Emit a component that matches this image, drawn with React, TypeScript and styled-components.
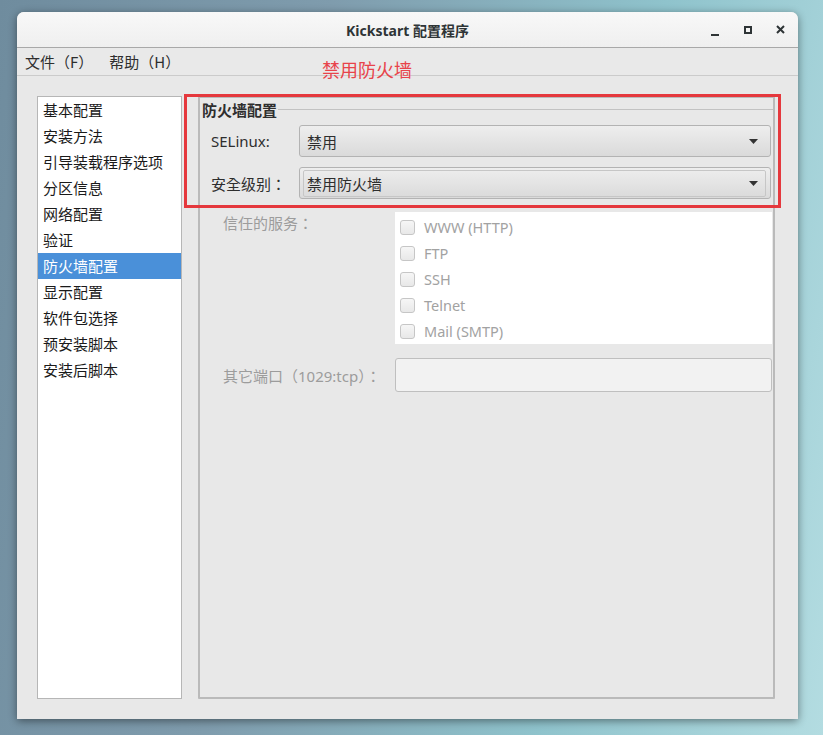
import React from 'react';
import styled, { createGlobalStyle } from 'styled-components';

const FONT = '"Noto Sans", "Noto Sans CJK SC", sans-serif';
const CJK_FONT = '"Noto Sans CJK SC", "Noto Sans", sans-serif';
const LABEL_FONT = '"Noto Sans", "Noto Sans CJK TC", "Noto Sans CJK SC", sans-serif';

const GlobalStyle = createGlobalStyle`
  html, body {
    margin: 0;
    padding: 0;
  }
  body {
    width: 823px;
    height: 735px;
    overflow: hidden;
    font-family: ${FONT};
    background: linear-gradient(100deg, #6f8c9e 0%, #7f9cad 35%, #8fc3cc 70%, #b3dce1 100%);
  }
`;

const Desktop = styled.div`
  padding: 12px 0 0 17px;
`;

const Window = styled.div`
  position: relative;
  width: 781px;
  height: 707px;
  display: flex;
  flex-direction: column;
  background: #e8e8e8;
  border-radius: 7px 7px 0 0;
  box-shadow: 0 2px 9px rgba(0, 0, 0, 0.45);
  overflow: hidden;
`;

const TitleBar = styled.div`
  height: 35px;
  display: grid;
  grid-template-columns: 1fr auto 1fr;
  align-items: center;
  background: linear-gradient(#f8f8f8, #efefef);
  border-bottom: 1px solid #a8a8a8;
`;

const Title = styled.div`
  grid-column: 2;
  font-size: 14px;
  font-weight: bold;
  color: #2e3436;
`;

const Controls = styled.div`
  justify-self: end;
  display: flex;
  padding-right: 1px;
`;

const ControlButton = styled.div`
  width: 33px;
  height: 35px;
  display: flex;
  align-items: center;
  justify-content: center;
  color: #2e3436;
`;

const MenuBar = styled.div`
  height: 27px;
  display: flex;
  align-items: center;
  gap: 16px;
  padding-left: 8px;
  background: #e9e9e9;
  border-bottom: 1px solid #cbcbcb;
`;

const MenuItem = styled.span`
  font-family: ${CJK_FONT};
  font-size: 15px;
  color: #2e2e2e;
`;

const Content = styled.div`
  flex: 1;
  display: flex;
  gap: 16px;
  padding: 20px 23px 20px 20px;
  min-height: 0;
`;

const Sidebar = styled.div`
  width: 145px;
  box-sizing: border-box;
  background: #fff;
  border: 1px solid #b6b6b6;
`;

const SidebarItem = styled.div<{ $active?: boolean }>`
  height: 26px;
  line-height: 26px;
  padding-left: 5px;
  font-size: 15px;
  color: ${(p) => (p.$active ? '#fff' : '#1a1a1a')};
  background: ${(p) => (p.$active ? '#4a90d9' : 'transparent')};
`;

const Panel = styled.div`
  flex: 1;
  border: 2px solid #bababa;
  border-radius: 1px;
  display: flex;
  flex-direction: column;
`;

const GroupHeader = styled.div`
  height: 22px;
  display: flex;
  align-items: center;
  margin-bottom: 5px;
`;

const GroupTitle = styled.span`
  font-size: 15px;
  font-weight: bold;
  color: #2e2e2e;
  padding: 0 1px 0 2px;
`;

const GroupLine = styled.div`
  flex: 1;
  height: 1px;
  background: #c2c2c2;
`;

const SelectRow = styled.div`
  display: grid;
  grid-template-columns: 88px 1fr;
  align-items: center;
  margin: 0 2px 10px 11px;
`;

const FieldLabel = styled.span<{ $disabled?: boolean }>`
  font-family: ${LABEL_FONT};
  font-size: 15px;
  color: ${(p) => (p.$disabled ? '#9c9c9c' : '#2e2e2e')};
`;

const Combo = styled.div<{ $focused?: boolean }>`
  position: relative;
  height: 32px;
  box-sizing: border-box;
  display: flex;
  align-items: center;
  justify-content: space-between;
  padding: 0 12px 0 7px;
  border: 1px solid #b3b3b3;
  border-radius: 3px;
  background: linear-gradient(#eeeeee, #dadada);
  font-size: 15px;
  color: #2e2e2e;
  &::after {
    content: '';
    display: ${(p) => (p.$focused ? 'block' : 'none')};
    position: absolute;
    top: 2px;
    left: 3px;
    right: 4px;
    bottom: 1px;
    border: 1px solid #c6c6c6;
    border-radius: 2px;
  }
`;

const ServicesRow = styled.div`
  display: grid;
  grid-template-columns: 172px 1fr;
  margin: 3px 1px 0 23px;
`;

const ServiceList = styled.div`
  background: #fff;
  padding: 2px 0 0;
  height: 132px;
  box-sizing: border-box;
`;

const ServiceItem = styled.div`
  height: 26px;
  display: flex;
  align-items: center;
  gap: 9px;
  padding-left: 5px;
  font-size: 14.5px;
  color: #a2a2a2;
`;

const CheckBox = styled.span`
  display: block;
  flex-shrink: 0;
  width: 15px;
  height: 15px;
  box-sizing: border-box;
  border: 1px solid #c6c6c6;
  border-radius: 3px;
  background: linear-gradient(#f6f6f6, #e8e8e8);
`;

const PortRow = styled.div`
  display: grid;
  grid-template-columns: 172px 1fr;
  align-items: center;
  margin: 14px 1px 0 23px;
`;

const Entry = styled.div`
  height: 34px;
  box-sizing: border-box;
  border: 1px solid #bfbfbf;
  border-radius: 3px;
  background: #f2f2f2;
`;

const Annotation = styled.div`
  position: absolute;
  left: 167px;
  top: 82px;
  width: 597px;
  height: 114px;
  box-sizing: border-box;
  border: 3px solid #e5383d;
  pointer-events: none;
`;

const AnnotationNote = styled.div`
  position: absolute;
  left: 305px;
  top: 47px;
  font-size: 18px;
  line-height: 22px;
  color: #e8434a;
`;

const Arrow = () => (
  <svg width="9" height="5" viewBox="0 0 9 5">
    <path d="M0 0h9L4.5 5z" fill="#333" />
  </svg>
);

const sections = [
  '基本配置',
  '安装方法',
  '引导装载程序选项',
  '分区信息',
  '网络配置',
  '验证',
  '防火墙配置',
  '显示配置',
  '软件包选择',
  '预安装脚本',
  '安装后脚本',
];

const services = ['WWW (HTTP)', 'FTP', 'SSH', 'Telnet', 'Mail (SMTP)'];

const App: React.FC = () => (
  <>
    <GlobalStyle />
    <Desktop>
      <Window>
        <TitleBar>
          <Title>Kickstart 配置程序</Title>
          <Controls>
            <ControlButton>
              <svg width="8" height="14" viewBox="0 0 8 14">
                <rect x="0" y="11" width="8" height="2" fill="currentColor" />
              </svg>
            </ControlButton>
            <ControlButton>
              <svg width="8" height="8" viewBox="0 0 8 8">
                <rect x="1" y="1" width="6" height="6" fill="none" stroke="currentColor" strokeWidth="2" />
              </svg>
            </ControlButton>
            <ControlButton>
              <svg width="9" height="9" viewBox="0 0 9 9">
                <path d="M1 1l7 7M8 1L1 8" stroke="currentColor" strokeWidth="2" />
              </svg>
            </ControlButton>
          </Controls>
        </TitleBar>
        <MenuBar>
          <MenuItem>文件（F）</MenuItem>
          <MenuItem>帮助（H）</MenuItem>
        </MenuBar>
        <Content>
          <Sidebar>
            {sections.map((s) => (
              <SidebarItem key={s} $active={s === '防火墙配置'}>
                {s}
              </SidebarItem>
            ))}
          </Sidebar>
          <Panel>
            <GroupHeader>
              <GroupTitle>防火墙配置</GroupTitle>
              <GroupLine />
            </GroupHeader>
            <SelectRow>
              <FieldLabel>SELinux:</FieldLabel>
              <Combo>
                禁用
                <Arrow />
              </Combo>
            </SelectRow>
            <SelectRow>
              <FieldLabel>安全级别：</FieldLabel>
              <Combo $focused>
                禁用防火墙
                <Arrow />
              </Combo>
            </SelectRow>
            <ServicesRow>
              <FieldLabel $disabled>信任的服务：</FieldLabel>
              <ServiceList>
                {services.map((s) => (
                  <ServiceItem key={s}>
                    <CheckBox />
                    {s}
                  </ServiceItem>
                ))}
              </ServiceList>
            </ServicesRow>
            <PortRow>
              <FieldLabel $disabled>其它端口（1029:tcp）：</FieldLabel>
              <Entry />
            </PortRow>
          </Panel>
        </Content>
        <AnnotationNote>禁用防火墙</AnnotationNote>
        <Annotation />
      </Window>
    </Desktop>
  </>
);

export default App;
